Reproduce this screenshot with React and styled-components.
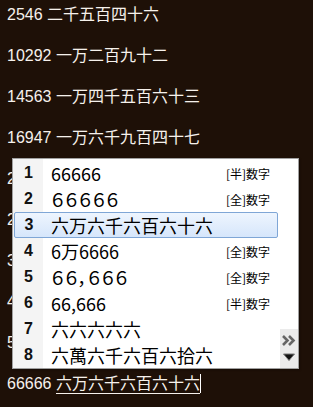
import React from 'react';
import styled, { createGlobalStyle } from 'styled-components';

const GlobalStyle = createGlobalStyle`
  html, body {
    margin: 0;
    padding: 0;
    background: #1e1007;
  }
`;

const Page = styled.div`
  position: relative;
  width: 313px;
  height: 407px;
  overflow: hidden;
  background: #1e1007;
  padding: 5px 0 0 7px;
  box-sizing: border-box;
  font-family: "Liberation Sans", "Noto Sans CJK JP", sans-serif;
  font-size: 16px;
  color: #f6f1ec;
`;

const Line = styled.div`
  line-height: 20px;
  height: 20px;
  margin-bottom: 21px;
  white-space: nowrap;
`;

const Composition = styled.span`
  border-bottom: 1px solid #f6f1ec;
  padding-bottom: 1px;
`;

const Caret = styled.span`
  display: inline-block;
  width: 1px;
  height: 19px;
  background: #ffffff;
  vertical-align: -4px;
`;

const Popup = styled.div`
  position: absolute;
  top: 158px;
  left: 12px;
  width: 287px;
  height: 211px;
  box-sizing: border-box;
  border: 1px solid #a0a0a0;
  background: #ffffff;
  display: flex;
  box-shadow: 1px 1px 2px rgba(0, 0, 0, 0.3);
`;

const List = styled.div`
  position: relative;
  width: 266px;
  padding-top: 1px;
  background: linear-gradient(to right, #f4f4f4 0, #f4f4f4 30px, #ffffff 30px);
`;

const Row = styled.div`
  display: flex;
  align-items: center;
  height: 26px;
  box-sizing: border-box;
  margin-right: 1px;
  border: 1px solid ${p => (p.$selected ? '#7fa6d6' : 'transparent')};
  border-radius: 2px;
  background: ${p => (p.$selected ? 'linear-gradient(#eef5fe, #d6e6fb)' : 'transparent')};
  margin-left: ${p => (p.$selected ? '1px' : '0')};
`;

const Num = styled.div`
  width: ${p => (p.$selected ? '28px' : '29px')};
  text-align: center;
  font-family: "Liberation Sans", sans-serif;
  font-weight: bold;
  font-size: 16px;
  color: #111;
`;

const Candidate = styled.div`
  flex: 1;
  padding-left: 8px;
  font-family: "Noto Sans CJK JP", sans-serif;
  font-size: 18px;
  font-feature-settings: "palt";
  color: #000;
  white-space: nowrap;
  line-height: 24px;
`;

const Note = styled.div`
  padding-right: 7px;
  font-family: "Noto Sans CJK JP", sans-serif;
  font-size: 12px;
  color: #000;
`;

const Side = styled.div`
  flex: 1;
  display: flex;
  flex-direction: column;
  justify-content: flex-end;
  padding-left: 1px;
`;

const Pager = styled.div`
  height: 39px;
  background: #ebebeb;
  display: flex;
  flex-direction: column;
  align-items: center;
  justify-content: space-around;
  padding: 3px 0 4px;
  box-sizing: border-box;
`;

const candidates = [
  { n: 1, text: '66666', note: '[半]数字' },
  { n: 2, text: '６６６６６', note: '[全]数字' },
  { n: 3, text: '六万六千六百六十六', selected: true },
  { n: 4, text: '6万6666', note: '[全]数字' },
  { n: 5, text: '６６，６６６', note: '[全]数字' },
  { n: 6, text: '66,666', note: '[半]数字' },
  { n: 7, text: '六六六六六' },
  { n: 8, text: '六萬六千六百六拾六' },
];

const lines = [
  '2546 二千五百四十六',
  '10292 一万二百九十二',
  '14563 一万四千五百六十三',
  '16947 一万六千九百四十七',
  '23058 二万三千五十八',
  '28361 二万八千三百六十一',
  '31740 三万一千七百四十',
  '45217 四万五千二百十七',
  '52893 五万二千八百九十三',
];

export default function App() {
  return (
    <>
      <GlobalStyle />
      <Page>
        {lines.map(l => (
          <Line key={l}>{l}</Line>
        ))}
        <Line>
          66666 <Composition>六万六千六百六十六</Composition>
          <Caret />
        </Line>
        <Popup>
          <List>
            {candidates.map(c => (
              <Row key={c.n} $selected={c.selected}>
                <Num $selected={c.selected}>{c.n}</Num>
                <Candidate>{c.text}</Candidate>
                {c.note && <Note>{c.note}</Note>}
              </Row>
            ))}
          </List>
          <Side>
            <Pager>
              <svg width="14" height="11" viewBox="0 0 14 11">
                <path d="M1 1 L5.5 5.5 L1 10" fill="none" stroke="#666" strokeWidth="2.6" />
                <path d="M7 1 L11.5 5.5 L7 10" fill="none" stroke="#666" strokeWidth="2.6" />
              </svg>
              <svg width="12" height="8" viewBox="0 0 12 8">
                <path d="M0.5 1 H11.5 L6 7.5 Z" fill="#111" stroke="#777" strokeWidth="1" />
              </svg>
            </Pager>
          </Side>
        </Popup>
      </Page>
    </>
  );
}
